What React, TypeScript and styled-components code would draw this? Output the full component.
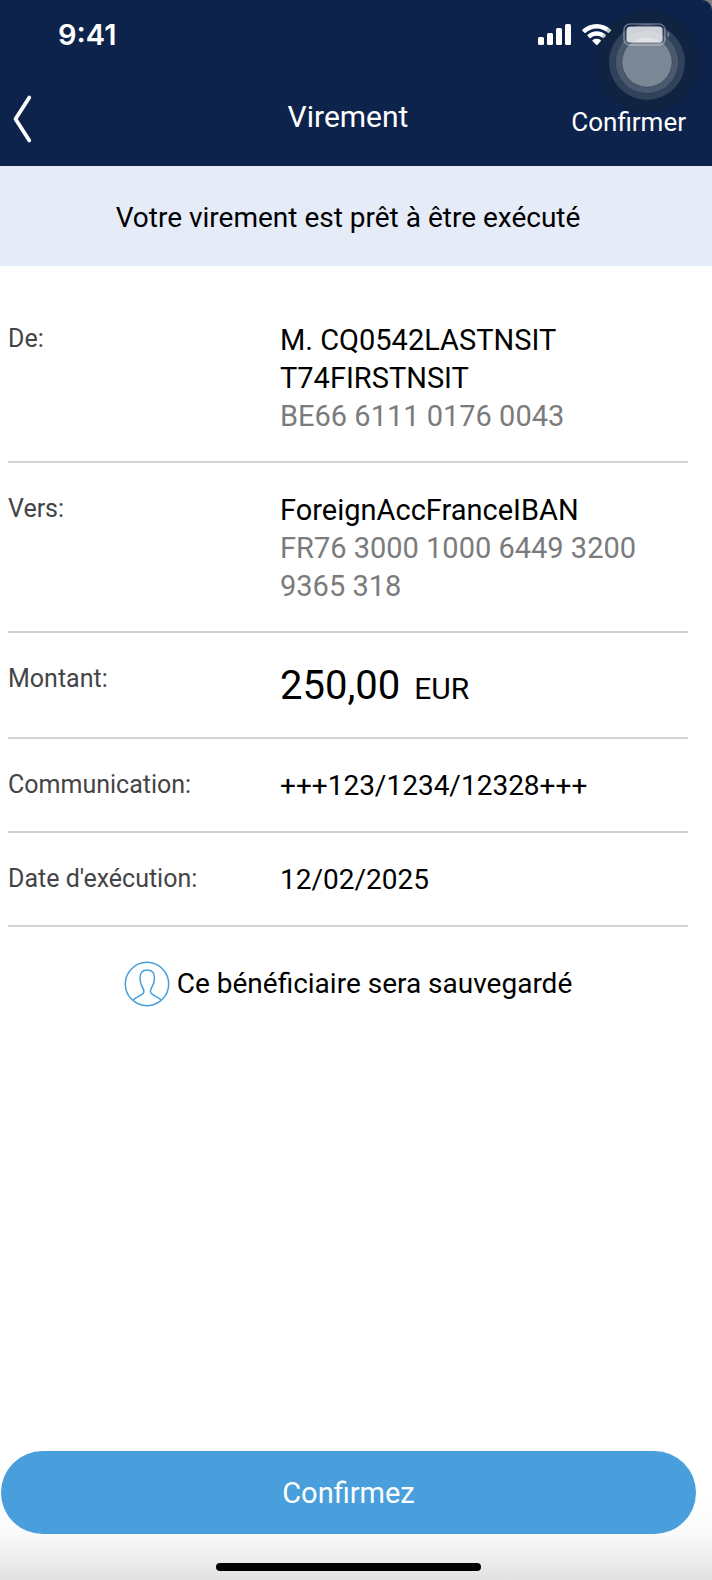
import React from "react";
import styled, { createGlobalStyle } from "styled-components";

const GlobalStyle = createGlobalStyle`
  *, *::before, *::after { box-sizing: border-box; }
  body {
    margin: 0;
    background: #ffffff;
    color: #000000;
    font-family: Roboto, "Liberation Sans", sans-serif;
    font-size: 29px;
    line-height: 38px;
  }
`;

const Screen = styled.div`
  display: flex;
  flex-direction: column;
  min-height: 100vh;
`;

const HeaderCorner = styled.div`
  background: #7d7f83;
`;

const Header = styled.header`
  position: relative;
  color: #ffffff;
  background: #0e234b;
  border-top-right-radius: 10px;
`;

const StatusBar = styled.div`
  display: flex;
  align-items: center;
  gap: 11px;
  height: 70px;
  padding: 0 42px 0 58px;
`;

const Clock = styled.time`
  margin-right: auto;
  font-family: Inter, sans-serif;
  font-size: 29px;
  font-weight: 600;
`;

const BatteryIcon = styled.svg`
  position: relative;
  z-index: 1;
`;

const AssistiveTouch = styled.svg`
  position: absolute;
  top: 10px;
  right: 13px;
`;

const NavBar = styled.nav`
  display: grid;
  grid-template-columns: 1fr auto 1fr;
  align-items: center;
  height: 96px;
  padding: 0 26px 0 10px;
`;

const IconButton = styled.button`
  display: flex;
  justify-self: start;
  padding: 2px 0 0;
  border: 0;
  color: inherit;
  background: none;
`;

const Title = styled.h1`
  margin: 0;
  padding-bottom: 2px;
  font-size: 30px;
  font-weight: 400;
`;

const NavAction = styled.button`
  justify-self: end;
  padding: 8px 0 0;
  border: 0;
  color: inherit;
  background: none;
  font: inherit;
  font-size: 26px;
`;

const Banner = styled.p`
  margin: 0;
  padding: 33px 16px 29px 0;
  text-align: center;
  font-size: 28px;
  background: #e5ecf8;
`;

const Details = styled.dl`
  margin: 27px 24px 0 8px;
`;

const Row = styled.div`
  display: grid;
  grid-template-columns: 2fr 3fr;
  padding: 28px 0 26px;
  border-bottom: 2px solid #d2d2d4;
`;

const Label = styled.dt`
  color: #444446;
  font-size: 25px;
  line-height: 36px;
`;

const Value = styled.dd<{ $compact?: boolean }>`
  margin: 0;
  font-size: ${(p) => (p.$compact ? "28px" : "29px")};
`;

const Account = styled.div`
  color: #7b7b7d;
`;

const Amount = styled.div`
  display: flex;
  align-items: baseline;
  gap: 14px;
  font-size: 40px;
  line-height: 50px;
`;

const Currency = styled.span`
  font-size: 30px;
  line-height: 38px;
`;

const Notice = styled.p`
  display: flex;
  align-items: center;
  justify-content: center;
  gap: 7px;
  margin: 34px 16px 0 0;
  font-size: 28px;
`;

const Footer = styled.footer`
  display: flex;
  flex-direction: column;
  align-items: center;
  gap: 29px;
  margin-top: auto;
  padding: 0 16px 9px 1px;
  background: linear-gradient(#ffffff 35%, #fafafa 64%, #e2e2e2);
`;

const ConfirmButton = styled.button`
  width: 100%;
  height: 83px;
  padding: 0;
  border: 0;
  border-radius: 42px;
  color: #ffffff;
  background: #499fdc;
  font: inherit;
`;

const HomeIndicator = styled.div`
  width: 38%;
  height: 8px;
  border-radius: 4px;
  background: #000000;
`;

const SignalIcons = () => (
  <svg width="74" height="24" viewBox="0 0 74 24" fill="#fff" aria-hidden="true">
    <rect x="0" y="14" width="6" height="8" rx="1.5" />
    <rect x="9" y="10" width="6" height="12" rx="1.5" />
    <rect x="18" y="5" width="6" height="17" rx="1.5" />
    <rect x="27" y="1" width="6" height="21" rx="1.5" />
    <path d="M58.700 1C64.200 1 69.200 3.200 72.900 6.600C73.300 7 73.300 7.500 72.900 7.900L71 9.800C70.600 10.200 70.100 10.200 69.700 9.800C66.800 7.100 62.900 5.500 58.700 5.500S50.600 7.100 47.700 9.800C47.300 10.200 46.800 10.200 46.400 9.800L44.500 7.900C44.100 7.500 44.100 7 44.500 6.600C48.200 3.200 53.200 1 58.700 1Z" />
    <path d="M58.700 8.300C62.200 8.300 65.400 9.600 67.800 11.800C68.200 12.200 68.200 12.700 67.800 13.100L65.800 15C65.400 15.400 65 15.400 64.600 15C63 13.600 61 12.800 58.700 12.800S54.400 13.600 52.800 15C52.400 15.400 52 15.400 51.600 15L49.600 13.100C49.200 12.700 49.200 12.200 49.600 11.800C52 9.600 55.200 8.300 58.700 8.300Z" />
    <path d="M58.700 15.700C60.300 15.700 61.700 16.200 62.800 17C63.300 17.400 63.300 17.900 62.900 18.300L59.400 21.800C59 22.200 58.500 22.200 58.100 21.800L54.600 18.300C54.200 17.900 54.200 17.400 54.700 17C55.700 16.200 57.100 15.700 58.700 15.700Z" />
  </svg>
);

const rows = [
  {
    label: "De:",
    value: (
      <>
        <div>M. CQ0542LASTNSIT T74FIRSTNSIT</div>
        <Account>BE66 6111 0176 0043</Account>
      </>
    ),
  },
  {
    label: "Vers:",
    value: (
      <>
        <div>ForeignAccFranceIBAN</div>
        <Account>FR76 3000 1000 6449 3200 9365 318</Account>
      </>
    ),
  },
  {
    label: "Montant:",
    value: (
      <Amount>
        250,00 <Currency>EUR</Currency>
      </Amount>
    ),
  },
  { label: "Communication:", value: "+++123/1234/12328+++", compact: true },
  { label: "Date d'exécution:", value: "12/02/2025", compact: true },
];

export default function App() {
  return (
    <Screen>
      <GlobalStyle />
      <HeaderCorner>
        <Header>
          <StatusBar>
            <Clock>9:41</Clock>
            <SignalIcons />
            <BatteryIcon width="47" height="24" viewBox="0 0 47 24" fill="#fff" aria-hidden="true">
              <rect x="1" y="1" width="41" height="21" rx="6" fill="none" stroke="#fff" strokeWidth="1.700" opacity="0.350" />
              <rect x="3.500" y="3.500" width="36" height="16" rx="3.500" opacity="0.760" />
              <path d="M44.500 8.500C46.800 9.500 46.800 13.500 44.500 14.500Z" opacity="0.400" />
            </BatteryIcon>
          </StatusBar>
          <NavBar>
            <IconButton type="button" aria-label="Retour">
              <svg width="26" height="50" viewBox="0 0 26 50" fill="none" stroke="#fff" strokeWidth="3.800" strokeLinecap="round" strokeLinejoin="round">
                <path d="M19.300 3.500L5.500 25L19.300 46.500" />
              </svg>
            </IconButton>
            <Title>Virement</Title>
            <NavAction type="button">Confirmer</NavAction>
          </NavBar>
          <AssistiveTouch width="104" height="104" viewBox="0 0 104 104" aria-hidden="true">
            <circle cx="52" cy="52" r="51.500" fill="rgba(24,38,42,0.270)" />
            <circle cx="52" cy="52" r="38" fill="rgba(255,255,255,0.140)" />
            <circle cx="52" cy="52" r="31.500" fill="rgba(255,255,255,0.120)" stroke="rgba(20,36,65,0.300)" />
            <circle cx="52" cy="52" r="25" fill="rgba(255,255,255,0.280)" stroke="rgba(20,36,65,0.300)" />
          </AssistiveTouch>
        </Header>
      </HeaderCorner>
      <main>
        <Banner>Votre virement est prêt à être exécuté</Banner>
        <Details>
          {rows.map((row) => (
            <Row key={row.label}>
              <Label>{row.label}</Label>
              <Value $compact={row.compact}>{row.value}</Value>
            </Row>
          ))}
        </Details>
        <Notice>
          <svg width="46" height="46" viewBox="0 0 46 46" fill="none" stroke="#46a1da" strokeWidth="1.500" aria-hidden="true">
            <circle cx="23" cy="23" r="21.700" />
            <path d="M8.800 39.200C11.500 36.300 17.500 34.600 19.400 32C20.400 30.500 19.700 28.300 18.300 26C16.500 23 16 20.500 16 17.200C16 12 18.300 9 23 9S30.500 12 30.500 17.200C30.500 20.500 29.700 23 28 26C26.500 28.300 26 30.500 27 32C29 34.600 34.800 36.300 37.500 39.200" />
          </svg>
          Ce bénéficiaire sera sauvegardé
        </Notice>
      </main>
      <Footer>
        <ConfirmButton type="button">Confirmez</ConfirmButton>
        <HomeIndicator />
      </Footer>
    </Screen>
  );
}
